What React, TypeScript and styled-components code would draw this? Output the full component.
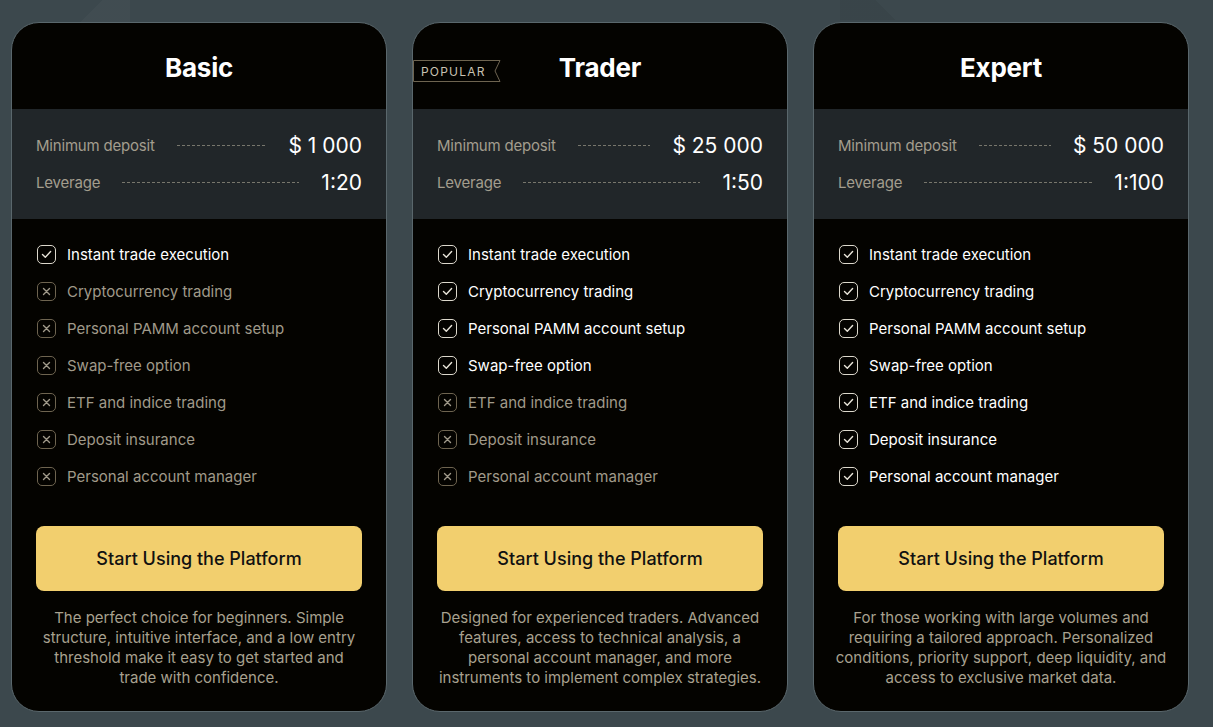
import React from 'react';
import styled, { createGlobalStyle } from 'styled-components';

const GlobalStyle = createGlobalStyle`
  html, body {
    margin: 0;
    padding: 0;
    background: #3c484d;
    font-family: Inter, "Noto Sans", Arial, sans-serif;
  }
`

const Page = styled.main`
  width: 1213px;
  height: 727px;
  box-sizing: border-box;
  padding: 22px 0 0 11px;
  display: grid;
  grid-template-columns: repeat(3, 376px);
  column-gap: 25px;
  align-items: start;
  overflow: hidden;
  background:
    linear-gradient(135deg, transparent 0 60%, rgba(255,255,255,0.025) 60% 100%) 0 0 / 130px 40px no-repeat,
    linear-gradient(225deg, transparent 0 50%, rgba(0,0,0,0.05) 50% 100%) 840px 0 / 90px 20px no-repeat,
    #3c484d;
`

const Card = styled.section`
  height: 690px;
  box-sizing: border-box;
  border: 1px solid #5a676c;
  border-radius: 28px;
  background: #040300;
  overflow: hidden;
  display: flex;
  flex-direction: column;
`

const Header = styled.header`
  position: relative;
  height: 86px;
  padding-top: 2px;
  box-sizing: border-box;
  display: flex;
  align-items: center;
  justify-content: center;
`

const Title = styled.h2`
  margin: 0;
  font-size: 26px;
  font-weight: 700;
  color: #fff;
  letter-spacing: -0.2px;
`

const Badge = styled.div`
  position: absolute;
  left: 0;
  top: 37px;
  width: 88px;
  height: 22px;
  display: flex;
  align-items: center;
  padding-left: 8px;
  box-sizing: border-box;
  svg {
    position: absolute;
    left: 0;
    top: 0;
  }
  span {
    position: relative;
    font-size: 12px;
    letter-spacing: 1.2px;
    color: #c8c2b2;
  }
`

const Stats = styled.div`
  background: #212629;
  padding: 24px 24px 25px;
  display: flex;
  flex-direction: column;
  gap: 13px;
`

const StatRow = styled.div`
  display: flex;
  align-items: center;
  height: 24px;
`

const StatLabel = styled.span`
  font-size: 15px;
  letter-spacing: -0.2px;
  color: #a39d8e;
`

const Dots = styled.span`
  flex: 1;
  height: 1px;
  margin: 0 22px 0 22px;
  background: repeating-linear-gradient(90deg, #77766c 0 3px, transparent 3px 5px);
`

const StatValue = styled.span`
  font-size: 21px;
  font-weight: 400;
  color: #fff;
`

const Features = styled.ul`
  list-style: none;
  margin: 0;
  padding: 25px 24px 0 25px;
  display: flex;
  flex-direction: column;
  gap: 17px;
`

const Feature = styled.li<{ $on: boolean }>`
  display: flex;
  align-items: center;
  gap: 11px;
  height: 20px;
  font-size: 15px;
  color: ${p => (p.$on ? '#ffffff' : '#a09a8a')};
`

const Box = styled.span<{ $on: boolean }>`
  width: 19px;
  height: 19px;
  box-sizing: border-box;
  border-radius: 5px;
  border: 1.5px solid ${p => (p.$on ? '#dcd8cc' : '#6e6450')};
  display: flex;
  align-items: center;
  justify-content: center;
  flex-shrink: 0;
`

const Action = styled.button`
  margin: 40px 24px 0;
  height: 65px;
  border: none;
  border-radius: 8px;
  background: #f2cf6e;
  color: #111;
  font-family: inherit;
  font-size: 18px;
  font-weight: 450;
  cursor: pointer;
`

const Desc = styled.p<{ $inset: number }>`
  margin: 17px ${p => p.$inset}px 0;
  text-align: center;
  font-size: 15px;
  line-height: 20px;
  color: #a8a18f;
`

const Check = () => (
  <svg width="11" height="9" viewBox="0 0 11 9">
    <path d="M1.5 4.6l2.8 2.7L9.6 1.6" fill="none" stroke="#e8e4d8" strokeWidth="1.4" strokeLinecap="round" strokeLinejoin="round" />
  </svg>
)

const Cross = () => (
  <svg width="9" height="9" viewBox="0 0 9 9">
    <path d="M1.5 1.5l6 6M7.5 1.5l-6 6" stroke="#a09a8a" strokeWidth="1.4" strokeLinecap="round" />
  </svg>
)

const featureNames = [
  'Instant trade execution',
  'Cryptocurrency trading',
  'Personal PAMM account setup',
  'Swap-free option',
  'ETF and indice trading',
  'Deposit insurance',
  'Personal account manager',
]

const plans = [
  {
    name: 'Basic',
    deposit: '$ 1 000',
    leverage: '1:20',
    enabled: 1,
    popular: false,
    inset: 27,
    text: 'The perfect choice for beginners. Simple structure, intuitive interface, and a low entry threshold make it easy to get started and trade with confidence.',
  },
  {
    name: 'Trader',
    deposit: '$ 25 000',
    leverage: '1:50',
    enabled: 4,
    popular: true,
    inset: 20,
    text: 'Designed for experienced traders. Advanced features, access to technical analysis, a personal account manager, and more instruments to implement complex strategies.',
  },
  {
    name: 'Expert',
    deposit: '$ 50 000',
    leverage: '1:100',
    enabled: 7,
    popular: false,
    inset: 20,
    text: 'For those working with large volumes and requiring a tailored approach. Personalized conditions, priority support, deep liquidity, and access to exclusive market data.',
  },
]

export default function App() {
  return (
    <>
      <GlobalStyle />
      <Page>
        {plans.map(plan => (
          <Card key={plan.name}>
            <Header>
              {plan.popular && (
                <Badge>
                  <svg width="88" height="22" viewBox="0 0 88 22">
                    <path d="M0.5 0.5H87L82 11L87 21.5H0.5Z" fill="none" stroke="#6e6450" strokeWidth="1" />
                  </svg>
                  <span>POPULAR</span>
                </Badge>
              )}
              <Title>{plan.name}</Title>
            </Header>
            <Stats>
              <StatRow>
                <StatLabel>Minimum deposit</StatLabel>
                <Dots />
                <StatValue>{plan.deposit}</StatValue>
              </StatRow>
              <StatRow>
                <StatLabel>Leverage</StatLabel>
                <Dots />
                <StatValue>{plan.leverage}</StatValue>
              </StatRow>
            </Stats>
            <Features>
              {featureNames.map((f, i) => {
                const on = i < plan.enabled
                return (
                  <Feature key={f} $on={on}>
                    <Box $on={on}>{on ? <Check /> : <Cross />}</Box>
                    {f}
                  </Feature>
                )
              })}
            </Features>
            <Action>Start Using the Platform</Action>
            <Desc $inset={plan.inset}>{plan.text}</Desc>
          </Card>
        ))}
      </Page>
    </>
  )
}
